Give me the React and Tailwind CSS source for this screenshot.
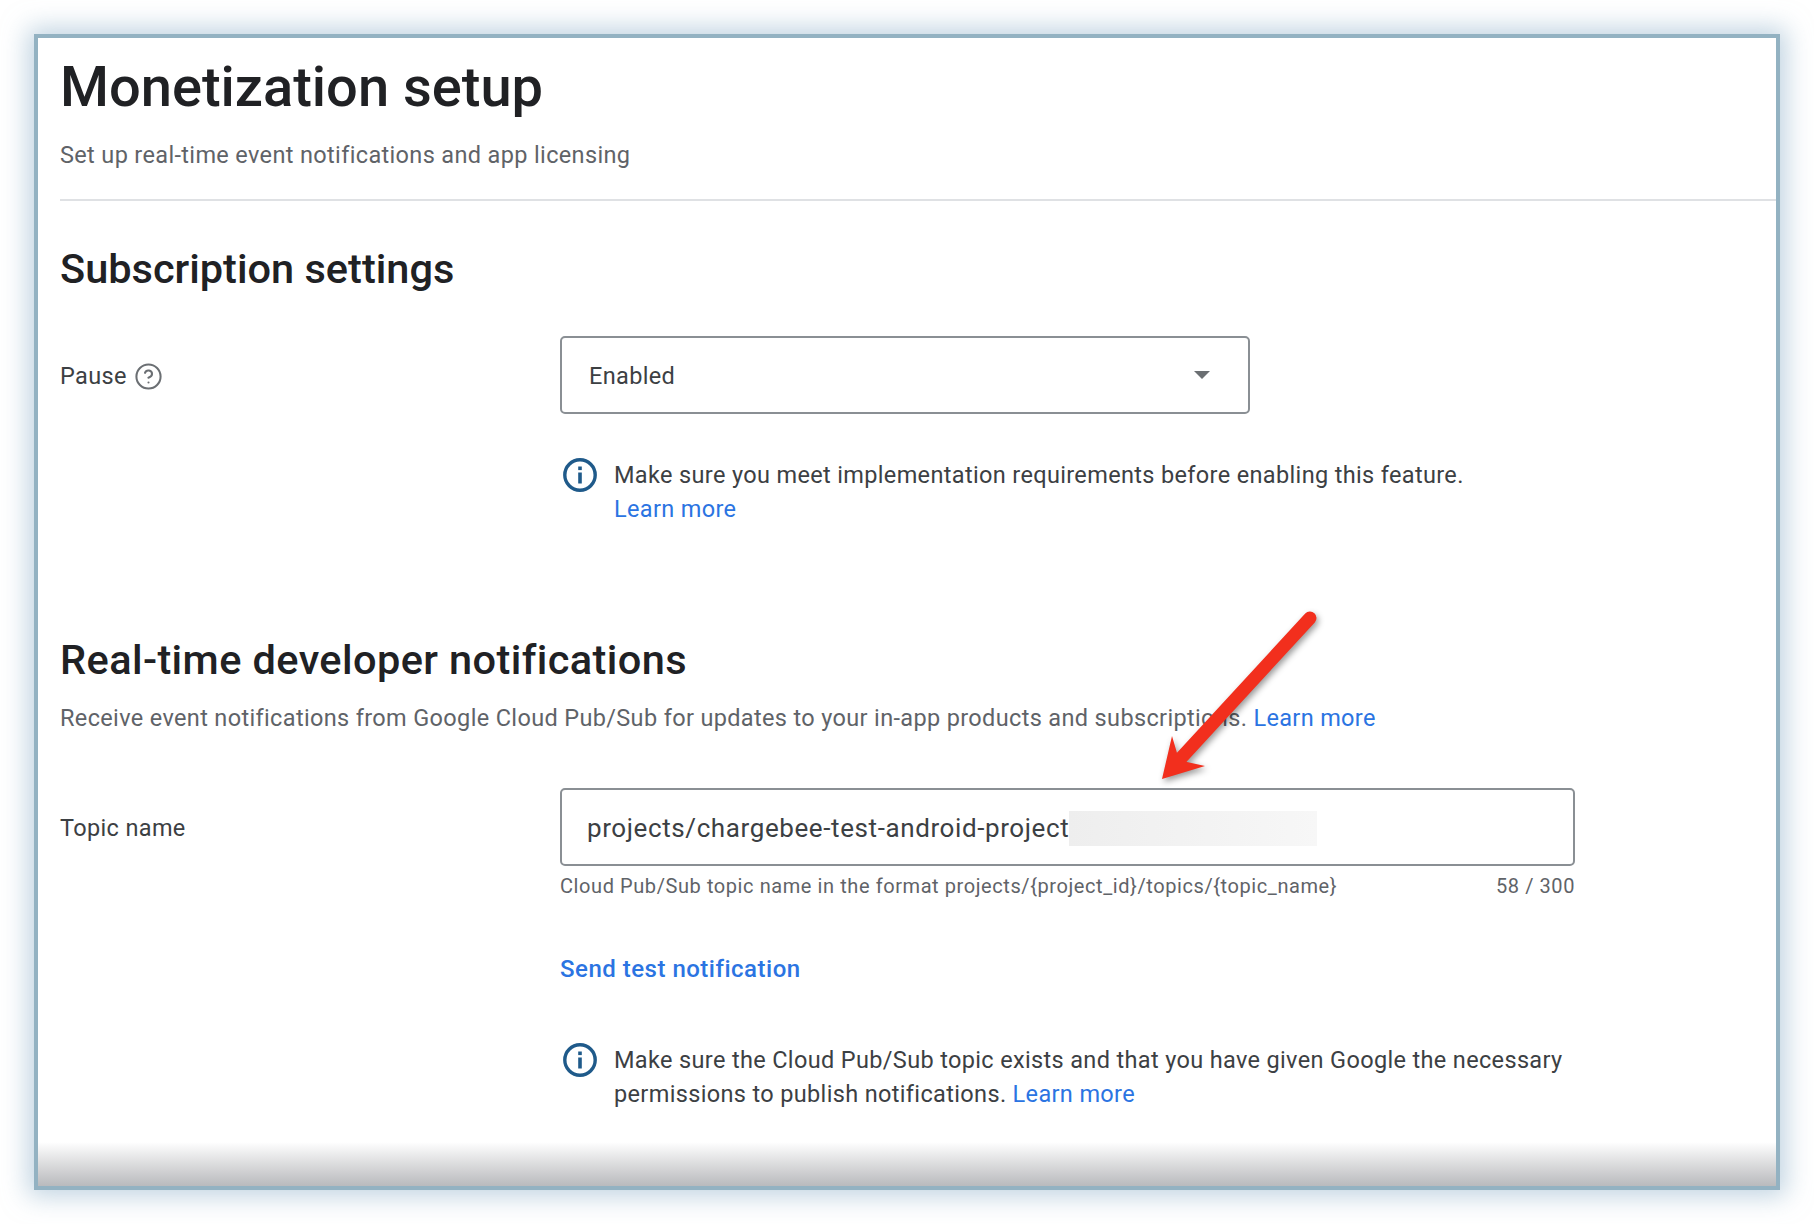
import { HelpCircle } from 'lucide-react';

function InfoIcon() {
  return (
    <svg viewBox="0 0 36 36" className="-mt-[1px] h-[36px] w-[36px] shrink-0" fill="none">
      <circle cx="18" cy="18" r="15.2" stroke="#1f5a8a" strokeWidth="3.4" />
      <rect x="16.2" y="15.5" width="3.6" height="11" fill="#1f5a8a" />
      <rect x="16.2" y="9.5" width="3.6" height="3.6" fill="#1f5a8a" />
    </svg>
  );
}

function Arrow() {
  return (
    <svg
      viewBox="0 0 180 185"
      className="pointer-events-none absolute left-[1112px] top-[567px] h-[185px] w-[180px] drop-shadow-[2px_3px_3px_rgba(0,0,0,0.4)]"
    >
      <line x1="160" y1="13" x2="32" y2="152" stroke="#f22f1d" strokeWidth="13" strokeLinecap="round" />
      <path d="M12 174 L22 131 L27 148 L37 157 L55 161 Z" fill="#f22f1d" />
    </svg>
  );
}

export default function App() {
  return (
    <div className="min-h-[1224px] bg-white px-[34px] pt-[34px] font-['Roboto',sans-serif]">
      <div className="relative h-[1156px] w-[1746px] overflow-hidden border-4 border-[#93b2c2] bg-white pl-[22px] shadow-[0_0_24px_6px_rgba(140,175,200,0.55)]">
        <h1 className="mt-[14px] text-[56px] font-medium leading-[70px] text-[#202124]">Monetization setup</h1>
        <p className="mt-[16px] text-[23.5px] leading-[34px] tracking-[0.35px] text-[#5f6368]">Set up real-time event notifications and app licensing</p>
        <div className="mt-[27px] h-[2px] bg-[#dfe1e4]" />

        <h2 className="mt-[43px] text-[41.5px] font-medium leading-[50px] text-[#202124]">Subscription settings</h2>

        <div className="mt-[42px] flex items-center">
          <div className="flex w-[500px] items-center gap-[7px] pt-[3px] text-[23.5px] tracking-[0.35px] text-[#3c4043]">
            Pause
            <HelpCircle className="h-[29px] w-[29px] text-[#6b6f73]" strokeWidth={1.7} />
          </div>
          <div className="flex h-[78px] w-[690px] items-center justify-between rounded-[5px] border-2 border-[#8a8f94] pl-[27px] pr-[38px] text-[23.5px] tracking-[0.35px] text-[#3c4043]">
            <span className="pt-[3px]">Enabled</span>
            <span className="h-0 w-0 border-x-[8px] border-t-[8px] border-x-transparent border-t-[#6b6f73]" />
          </div>
        </div>

        <div className="ml-[502px] mt-[44px] flex gap-[16px]">
          <InfoIcon />
          <p className="text-[23.5px] leading-[34px] tracking-[0.35px] text-[#3c4043]">
            Make sure you meet implementation requirements before enabling this feature.
            <br />
            <a className="text-[#2b74e2]">Learn more</a>
          </p>
        </div>

        <h2 className="mt-[109px] text-[41.5px] font-medium leading-[50px] tracking-[0.4px] text-[#202124]">Real-time developer notifications</h2>
        <p className="mt-[16px] text-[23.5px] leading-[34px] tracking-[0.35px] text-[#5f6368]">
          Receive event notifications from Google Cloud Pub/Sub for updates to your in-app products and subscriptions. <a className="text-[#2b74e2]">Learn more</a>
        </p>

        <div className="mt-[53px] flex items-center">
          <div className="w-[500px] pt-[3px] text-[23.5px] tracking-[0.35px] text-[#3c4043]">Topic name</div>
          <div className="flex h-[78px] w-[1015px] items-center rounded-[5px] border-2 border-[#8a8f94] pl-[25px] text-[26px] tracking-[0.6px] text-[#3c4043]">
            <span className="pt-[2px]">projects/chargebee-test-android-project</span>
            <span className="mt-[3px] h-[35px] w-[248px] bg-gradient-to-r from-[#eeeeee] to-[#f7f7f7]" />
          </div>
        </div>

        <div className="ml-[500px] mt-[6px] flex w-[1015px] justify-between text-[20px] leading-[28px] tracking-[0.58px] text-[#5f6368]">
          <span>{'Cloud Pub/Sub topic name in the format projects/{project_id}/topics/{topic_name}'}</span>
          <span>58 / 300</span>
        </div>

        <a className="ml-[500px] mt-[52px] block text-[24px] font-medium leading-[34px] tracking-[0.5px] text-[#2b74e2]">Send test notification</a>

        <div className="ml-[502px] mt-[57px] flex gap-[16px]">
          <InfoIcon />
          <p className="text-[23.5px] leading-[34px] tracking-[0.35px] text-[#3c4043]">
            Make sure the Cloud Pub/Sub topic exists and that you have given Google the necessary
            <br />
            permissions to publish notifications. <a className="text-[#2b74e2]">Learn more</a>
          </p>
        </div>

        <div className="absolute inset-x-0 bottom-0 h-[44px] bg-gradient-to-b from-white to-[#b9babd]" />
        <Arrow />
      </div>
    </div>
  );
}
